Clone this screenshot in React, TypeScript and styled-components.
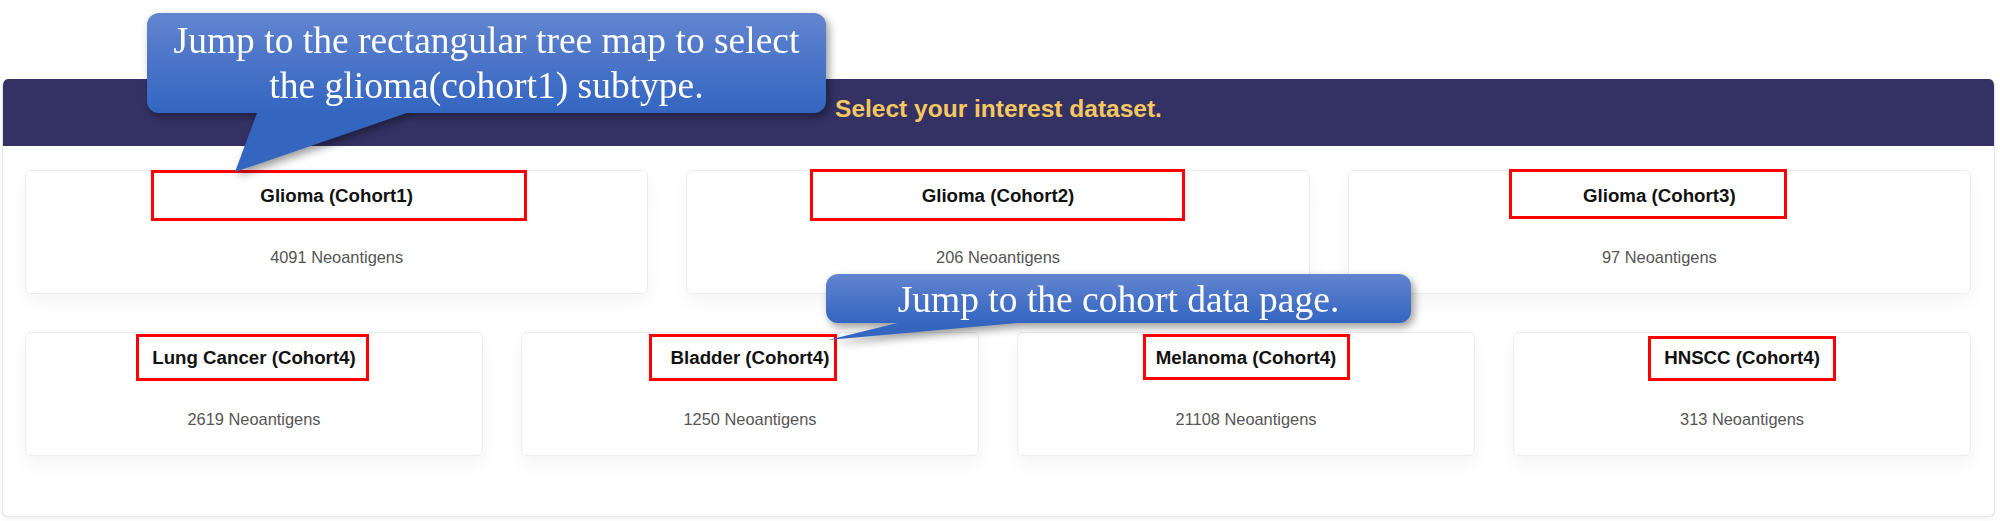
import React from "react";
import styled, { createGlobalStyle } from "styled-components";

const GlobalStyle = createGlobalStyle`
  html, body {
    margin: 0;
    padding: 0;
    background: #ffffff;
  }
  body {
    font-family: "Liberation Sans", Arial, sans-serif;
  }
  * { box-sizing: border-box; }
`;

const Page = styled.div`
  position: relative;
  width: 2000px;
  height: 521px;
  padding-top: 79px;
  overflow: hidden;
`;

const Panel = styled.section`
  margin-left: 2px;
  width: 1993px;
  height: 438px;
  border: 1px solid #e6e7ea;
  border-top: none;
  border-radius: 6px;
  background: #ffffff;
  box-shadow: 0 2px 5px rgba(0, 0, 0, 0.06);
  overflow: hidden;
`;

const Header = styled.header`
  height: 67px;
  background: #343264;
  padding-top: 16px;
  text-align: center;
  color: #f6c85f;
  font-weight: 700;
  font-size: 24.5px;
  line-height: 28px;
`;

const Body = styled.div`
  display: flex;
  flex-direction: column;
  gap: 38px;
  padding: 24px 23px 0 22px;
`;

const Row = styled.div<{ $cols: number }>`
  display: grid;
  grid-template-columns: repeat(${(p) => p.$cols}, 1fr);
  gap: 38px;
`;

const Card = styled.div`
  position: relative;
  height: 124px;
  border: 1px solid #ebecee;
  border-radius: 6px;
  background: #ffffff;
  box-shadow: 0 8px 20px rgba(0, 0, 0, 0.045);
  padding-top: 13px;
  text-align: center;
`;

const Title = styled.div`
  font-weight: 700;
  font-size: 18.7px;
  line-height: 24px;
  color: #111111;
`;

const Count = styled.div`
  margin-top: 38px;
  font-size: 16.4px;
  line-height: 22px;
  color: #555555;
`;

const Highlight = styled.div<{ $l: number; $t: number; $w: number; $h: number }>`
  position: absolute;
  left: ${(p) => p.$l}px;
  top: ${(p) => p.$t}px;
  width: ${(p) => p.$w}px;
  height: ${(p) => p.$h}px;
  border: 3px solid #ff0000;
  pointer-events: none;
`;

const CalloutWrap = styled.div<{ $x: number; $y: number; $w: number }>`
  position: absolute;
  left: ${(p) => p.$x}px;
  top: ${(p) => p.$y}px;
  width: ${(p) => p.$w}px;
  filter: drop-shadow(3px 4px 4px rgba(0, 0, 0, 0.4));
  z-index: 5;
`;

const Tail = styled.svg`
  position: absolute;
  left: 0;
  top: 0;
  overflow: visible;
`;

const Bubble = styled.div<{ $h: number; $pt: number }>`
  position: relative;
  height: ${(p) => p.$h}px;
  padding-top: ${(p) => p.$pt}px;
  border-radius: 12px;
  background: linear-gradient(180deg, #6285cf 0%, #4a74c8 50%, #3366c1 100%);
  color: #ffffff;
  font-family: "Liberation Serif", "Times New Roman", serif;
  font-size: 37.5px;
  line-height: 45px;
  text-align: center;
  white-space: nowrap;
`;

type CardData = {
  title: string;
  count: string;
  box: [number, number, number, number];
};

const row1: CardData[] = [
  { title: "Glioma (Cohort1)", count: "4091 Neoantigens", box: [125, -1, 376, 51] },
  { title: "Glioma (Cohort2)", count: "206 Neoantigens", box: [123, -2, 375, 52] },
  { title: "Glioma (Cohort3)", count: "97 Neoantigens", box: [160, -2, 278, 50] },
];

const row2: CardData[] = [
  { title: "Lung Cancer (Cohort4)", count: "2619 Neoantigens", box: [110, 1, 233, 47] },
  { title: "Bladder (Cohort4)", count: "1250 Neoantigens", box: [127, 1, 188, 47] },
  { title: "Melanoma (Cohort4)", count: "21108 Neoantigens", box: [125, 1, 207, 46] },
  { title: "HNSCC (Cohort4)", count: "313 Neoantigens", box: [134, 3, 188, 45] },
];

const DatasetCard: React.FC<{ d: CardData }> = ({ d }) => (
  <Card>
    <Title>{d.title}</Title>
    <Count>{d.count}</Count>
    <Highlight $l={d.box[0]} $t={d.box[1]} $w={d.box[2]} $h={d.box[3]} />
  </Card>
);

export default function App() {
  return (
    <>
      <GlobalStyle />
      <Page>
        <Panel>
          <Header>Select your interest dataset.</Header>
          <Body>
            <Row $cols={3}>
              {row1.map((d) => (
                <DatasetCard key={d.title} d={d} />
              ))}
            </Row>
            <Row $cols={4}>
              {row2.map((d) => (
                <DatasetCard key={d.title} d={d} />
              ))}
            </Row>
          </Body>
        </Panel>

        <CalloutWrap $x={147} $y={13} $w={679}>
          <Tail width="679" height="160">
            <polygon points="113,92 283,92 88,159" fill="#3466c0" />
          </Tail>
          <Bubble $h={100} $pt={5}>
            Jump to the rectangular tree map to select
            <br />
            the glioma(cohort1) subtype.
          </Bubble>
        </CalloutWrap>

        <CalloutWrap $x={826} $y={274} $w={585}>
          <Tail width="585" height="70">
            <polygon points="92,44 247,44 2,66" fill="#3466c0" />
          </Tail>
          <Bubble $h={49} $pt={3}>
            Jump to the cohort data page.
          </Bubble>
        </CalloutWrap>
      </Page>
    </>
  );
}
